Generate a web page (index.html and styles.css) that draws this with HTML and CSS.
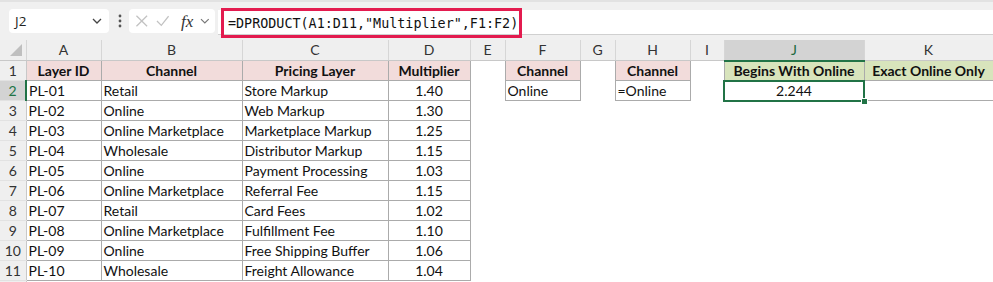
FILE: index.html
```html
<!DOCTYPE html>
<html>
<head>
<meta charset="utf-8">
<link rel="stylesheet" href="styles.css">
</head>
<body>
<div class="toolbar">
  <div class="namebox">
    <span class="nb-text">J2</span>
    <svg class="nb-chev" width="10" height="6" viewBox="0 0 10 6"><polyline points="1,1 5,5 9,1" fill="none" stroke="#444" stroke-width="1.3"/></svg>
  </div>
  <svg class="dots" width="6" height="14" viewBox="0 0 6 14"><circle cx="3" cy="2" r="1.4" fill="#555"/><circle cx="3" cy="7" r="1.4" fill="#555"/><circle cx="3" cy="12" r="1.4" fill="#555"/></svg>
  <div class="fxbox">
    <svg width="14" height="14" viewBox="0 0 14 14"><line x1="1.5" y1="1.5" x2="12.5" y2="12.5" stroke="#c2c2c2" stroke-width="1.3"/><line x1="12.5" y1="1.5" x2="1.5" y2="12.5" stroke="#c2c2c2" stroke-width="1.3"/></svg>
    <svg width="14" height="12" viewBox="0 0 14 12"><polyline points="1,6 5.5,10.5 13,1" fill="none" stroke="#c2c2c2" stroke-width="1.3"/></svg>
    <span class="fx">fx</span>
    <svg width="10" height="6" viewBox="0 0 10 6"><polyline points="1,1 5,5 9,1" fill="none" stroke="#777" stroke-width="1.2"/></svg>
  </div>
  <div class="formula">
    <span class="formula-text">=DPRODUCT(A1:D11,"Multiplier",F1:F2)</span>
  </div>
</div>
<table class="sheet">
  <colgroup>
    <col class="c-rh"><col class="c-a"><col class="c-b"><col class="c-c"><col class="c-d"><col class="c-e"><col class="c-f"><col class="c-g"><col class="c-h"><col class="c-i"><col class="c-j"><col class="c-k">
  </colgroup>
  <tr class="colhead">
    <th class="corner"><svg width="26" height="20" viewBox="0 0 26 20"><polygon points="22,4 22,16 10,16" fill="#bfbfbf"/></svg></th>
    <th>A</th><th>B</th><th>C</th><th>D</th><th>E</th><th>F</th><th>G</th><th>H</th><th>I</th><th class="col-sel">J</th><th>K</th>
  </tr>
  <tr>
    <td class="rh">1</td>
    <td class="b hd">Layer ID</td><td class="b hd">Channel</td><td class="b hd">Pricing Layer</td><td class="b hd">Multiplier</td>
    <td></td><td class="b hd">Channel</td><td></td><td class="b hd">Channel</td><td></td>
    <td class="b hg">Begins With Online</td><td class="b hg">Exact Online Only</td>
  </tr>
  <tr>
    <td class="rh row-sel">2</td>
    <td class="b">PL-01</td><td class="b">Retail</td><td class="b">Store Markup</td><td class="b num">1.40</td>
    <td></td><td class="b">Online</td><td></td><td class="b">=Online</td><td></td>
    <td class="b num sel"><div class="selwrap">2.244<span class="handle"></span></div></td><td class="b"></td>
  </tr>
  <tr><td class="rh">3</td><td class="b">PL-02</td><td class="b">Online</td><td class="b">Web Markup</td><td class="b num">1.30</td><td colspan="7"></td></tr>
  <tr><td class="rh">4</td><td class="b">PL-03</td><td class="b">Online Marketplace</td><td class="b">Marketplace Markup</td><td class="b num">1.25</td><td colspan="7"></td></tr>
  <tr><td class="rh">5</td><td class="b">PL-04</td><td class="b">Wholesale</td><td class="b">Distributor Markup</td><td class="b num">1.15</td><td colspan="7"></td></tr>
  <tr><td class="rh">6</td><td class="b">PL-05</td><td class="b">Online</td><td class="b">Payment Processing</td><td class="b num">1.03</td><td colspan="7"></td></tr>
  <tr><td class="rh">7</td><td class="b">PL-06</td><td class="b">Online Marketplace</td><td class="b">Referral Fee</td><td class="b num">1.15</td><td colspan="7"></td></tr>
  <tr><td class="rh">8</td><td class="b">PL-07</td><td class="b">Retail</td><td class="b">Card Fees</td><td class="b num">1.02</td><td colspan="7"></td></tr>
  <tr><td class="rh">9</td><td class="b">PL-08</td><td class="b">Online Marketplace</td><td class="b">Fulfillment Fee</td><td class="b num">1.10</td><td colspan="7"></td></tr>
  <tr><td class="rh">10</td><td class="b">PL-09</td><td class="b">Online</td><td class="b">Free Shipping Buffer</td><td class="b num">1.06</td><td colspan="7"></td></tr>
  <tr><td class="rh">11</td><td class="b">PL-10</td><td class="b">Wholesale</td><td class="b">Freight Allowance</td><td class="b num">1.04</td><td colspan="7"></td></tr>
  <tr><td class="rh"></td><td colspan="11"></td></tr>
</table>
</body>
</html>
```

FILE: styles.css
```css
html, body {
  margin: 0;
  padding: 0;
  background: #ffffff;
  overflow: hidden;
}
body {
  width: 993px;
  height: 282px;
  font-family: Lato, "Liberation Sans", sans-serif;
}
.toolbar {
  border-top: 2px solid #e2e2e2;
  background: #f0f0f0;
  display: flex;
  align-items: flex-start;
  padding-top: 7px;
  box-sizing: border-box;
  height: 40px;
}
.namebox {
  margin-left: 9px;
  width: 100px;
  height: 24px;
  background: #fff;
  border-radius: 4px;
  box-sizing: border-box;
  display: flex;
  align-items: center;
  justify-content: space-between;
  padding: 0 7px 0 6px;
}
.nb-text {
  font-family: "Open Sans", Lato, sans-serif;
  font-size: 13.5px;
  color: #222;
}
.dots {
  margin: 5px 0 0 8px;
}
.fxbox {
  margin-left: 6px;
  width: 86px;
  height: 24px;
  background: #fff;
  border-radius: 4px;
  display: flex;
  align-items: center;
  box-sizing: border-box;
  padding: 0 5px 0 6px;
  gap: 7px;
}
.fx {
  font-family: "Liberation Serif", serif;
  font-style: italic;
  font-size: 17px;
  color: #333;
  margin-left: 5px;
  line-height: 1;
}
.formula {
  margin-left: 3px;
  margin-top: 1px;
  flex: 1;
  height: 25px;
  background: #fff;
  border-bottom: 1px solid #d0d0d0;
  box-sizing: border-box;
  display: flex;
  align-items: center;
}
.formula-text {
  margin-left: 3px;
  height: 30px;
  box-sizing: border-box;
  border: 3px solid #e31b4f;
  padding: 0 1px 0 4px;
  display: flex;
  align-items: center;
  font-family: "DejaVu Sans Mono", "Liberation Mono", monospace;
  font-size: 13.4px;
  color: #111;
  margin-top: 2px;
}
.sheet {
  border-collapse: collapse;
  table-layout: fixed;
  width: 993px;
  font-size: 14px;
}
.c-rh { width: 26px; }
.c-a { width: 75px; }
.c-b { width: 141px; }
.c-c { width: 146px; }
.c-d { width: 82px; }
.c-e { width: 35px; }
.c-f { width: 75px; }
.c-g { width: 35px; }
.c-h { width: 75px; }
.c-i { width: 34px; }
.c-j { width: 140px; }
.c-k { width: 129px; }
.sheet tr {
  height: 20px;
}
.sheet td, .sheet th {
  padding: 0 2px;
  height: 20px;
  line-height: 18px;
  white-space: nowrap;
  overflow: visible;
  color: #111;
  box-sizing: border-box;
}
.colhead th {
  background: #efefef;
  font-weight: normal;
  color: #333;
  text-align: center;
  border-right: 1px solid #d6d6d6;
  border-bottom: 1px solid #c8c8c8;
  padding: 0;
}
.colhead th.corner {
  padding: 0;
  line-height: 0;
}
.corner svg { display: block; }
.colhead th.col-sel {
  background: #d3d3d3;
  color: #1d6a3e;
  border-bottom: 2px solid #217346;
}
.rh {
  background: #efefef;
  text-align: center;
  color: #333 !important;
  border-right: 1px solid #c8c8c8;
  border-bottom: 1px solid #e2e2e2;
  padding: 0 !important;
}
.rh.row-sel {
  background: #d3d3d3;
  color: #217346 !important;
  border-right: 2px solid #217346;
}
.b {
  border: 1px solid #ababab;
}
.hd {
  background: #f2dcdb;
  font-weight: bold;
  text-align: center;
}
.hg {
  background: #d8e4bc;
  font-weight: bold;
  text-align: center;
}
.num {
  text-align: center;
}
.sheet td.sel {
  border: 2px solid #217346;
  padding: 0;
}
.selwrap {
  position: relative;
  height: 17px;
  line-height: 17px;
}
.handle {
  position: absolute;
  right: -5px;
  bottom: -6px;
  width: 5px;
  height: 5px;
  background: #217346;
  border: 1px solid #fff;
}
```
